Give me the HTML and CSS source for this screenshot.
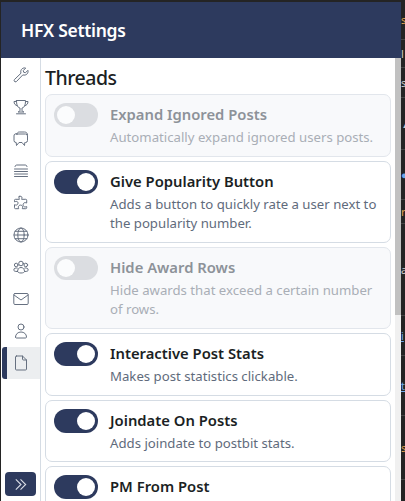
FILE: index.html
```html
<!DOCTYPE html>
<html lang="en">
<head>
<meta charset="utf-8">
<title>HFX Settings</title>
<link rel="stylesheet" href="styles.css">
</head>
<body>
<div class="frame">
  <div class="window">
    <header class="header">HFX Settings</header>
    <div class="main">
      <nav class="sidebar">
        <div class="nav-list">
          <a class="nav-item"><svg class="icon" viewBox="0 0 16 16"><path d="M2 14.600 1.400 14a1 1 0 0 1 0-1.400L8 6.200c-.6-1.800-.1-3.500 1.200-4.500 1.100-.8 2.400-1 3.500-.6L10.300 3.500l.4 1.800 1.800.4 2.400-2.400c.4 1.200.1 2.600-.8 3.600-1.100 1.200-2.700 1.500-4.300 1L3.400 14.600a1 1 0 0 1-1.400 0z"/></svg></a>
          <a class="nav-item"><svg class="icon" viewBox="0 0 16 16"><path d="M3.500 1.500h9c0 3.500-.6 7-3.500 7.500v2.500c0 .8 1.500 1 2 1.500H5c.5-.5 2-.7 2-1.500V9C4.100 8.500 3.500 5 3.500 1.500zM3.500 2.500H1c0 2.300 1.200 3.800 3.300 4.300M12.500 2.500H15c0 2.300-1.200 3.800-3.300 4.300M3.500 14.800h9"/></svg></a>
          <a class="nav-item"><svg class="icon" viewBox="0 0 16 16"><path d="M4 3h8.500a2 2 0 0 1 2 2v4.500a2 2 0 0 1-2 2h-.7l-.3 3-2.500-3h-3l-2.500 3-.3-3H3a2 2 0 0 1-2-2V5a2 2 0 0 1 3-2z"/><path d="M3.800 3.200c.2-1.300 1.200-2.200 2.500-2.200h5.200c1.800 0 3 1.100 3 2.800"/></svg></a>
          <a class="nav-item"><svg class="icon" viewBox="0 0 16 16"><path d="M2 3.500c0-1 1-1.500 2-1.500h8c1 0 2 .5 2 1.500M1.500 6h13M1.500 8.500h13M1.500 11h13M1.500 13.500h13"/></svg></a>
          <a class="nav-item"><svg class="icon" viewBox="0 0 16 16"><path d="M6 1.500c1.300-.8 3-.2 3 1.300 0 .6-.4 1-.4 1.500h4.100a1 1 0 0 1 1 1v2.700c-.5 0-1-.4-1.600-.4-1.400 0-2 1.300-2 2.200s.7 2.200 2 2.200c.6 0 1.100-.4 1.600-.4v1.100a1 1 0 0 1-1 1H9.300c0-.6.400-1 .4-1.600 0-1.300-1.200-2-2.200-2s-2.200.7-2.200 2c0 .6.400 1 .4 1.600H2.500a1 1 0 0 1-1-1v-3c.5 0 1 .4 1.600.4 1.200 0 1.900-1 1.900-2.100S4.300 6.400 3.100 6.400c-.6 0-1.100.4-1.600.4V5.300a1 1 0 0 1 1-1h3.900c0-.5-.4-.9-.4-1.500 0-.5.100-1 .4-1.300z"/></svg></a>
          <a class="nav-item"><svg class="icon" viewBox="0 0 16 16"><circle cx="8" cy="8" r="7"/><ellipse cx="8" cy="8" rx="3.200" ry="7"/><path d="M1 8h14M2 4.300h12M2 11.700h12"/></svg></a>
          <a class="nav-item"><svg class="icon" viewBox="0 0 16 16"><circle cx="8" cy="4.500" r="2.300"/><circle cx="3.200" cy="6" r="1.800"/><circle cx="12.800" cy="6" r="1.800"/><path d="M4.500 12.500C4.500 10 6 8.500 8 8.500s3.500 1.500 3.500 4c0 .8-1.500 1.500-3.500 1.500s-3.500-.7-3.500-1.500zM4.300 9.100C3 8.700.8 9 .8 11c0 1 1 1.500 3.400 1.500M11.700 9.100c1.300-.4 3.500-.1 3.500 1.900 0 1-1 1.500-3.400 1.500"/></svg></a>
          <a class="nav-item"><svg class="icon" viewBox="0 0 16 16"><rect x=".8" y="2.500" width="14.400" height="11" rx="1.200"/><path d="M1 4l7 5 7-5"/></svg></a>
          <a class="nav-item"><svg class="icon" viewBox="0 0 16 16"><circle cx="8" cy="4" r="3"/><path d="M2.500 14c0-3 2.500-5 5.500-5s5.500 2 5.500 5c0 .6-.5 1-1 1h-9c-.5 0-1-.4-1-1z"/></svg></a>
          <a class="nav-item active"><svg class="icon" viewBox="0 0 16 16"><path d="M3.500 1h6L13.500 5v9a1 1 0 0 1-1 1h-9a1 1 0 0 1-1-1V2a1 1 0 0 1 1-1zM9.500 1v3a1 1 0 0 0 1 1h3"/></svg></a>
        </div>
        <button class="collapse" type="button" aria-label="Expand"><svg class="chev" viewBox="0 0 16 16"><path d="M3 2.500 8.500 8 3 13.500M8 2.500 13.500 8 8 13.500"/></svg></button>
      </nav>
      <section class="content">
        <h2 class="heading">Threads</h2>
        <div class="cards">
          <div class="card off">
            <span class="toggle"></span>
            <div class="text"><div class="name">Expand Ignored Posts</div><div class="desc">Automatically expand ignored users posts.</div></div>
          </div>
          <div class="card">
            <span class="toggle on"></span>
            <div class="text"><div class="name">Give Popularity Button</div><div class="desc">Adds a button to quickly rate a user next to the popularity number.</div></div>
          </div>
          <div class="card off">
            <span class="toggle"></span>
            <div class="text"><div class="name">Hide Award Rows</div><div class="desc">Hide awards that exceed a certain number of rows.</div></div>
          </div>
          <div class="card">
            <span class="toggle on"></span>
            <div class="text"><div class="name">Interactive Post Stats</div><div class="desc">Makes post statistics clickable.</div></div>
          </div>
          <div class="card">
            <span class="toggle on"></span>
            <div class="text"><div class="name">Joindate On Posts</div><div class="desc">Adds joindate to postbit stats.</div></div>
          </div>
          <div class="card">
            <span class="toggle on"></span>
            <div class="text"><div class="name">PM From Post</div></div>
          </div>
        </div>
      </section>
      <div class="scrollbar"><div class="thumb"></div></div>
    </div>
  </div>
  <aside class="behind">
    <div class="strip h40"><span class="bit amber">s</span></div>
    <div class="strip h28"><span class="bit">l</span></div>
    <div class="strip h30"><span class="bit">s</span></div>
    <div class="strip h52"><span class="bit">▲</span></div>
    <div class="strip h50"><span class="bit blue">●</span></div>
    <div class="strip h24"><span class="bit amber">r</span></div>
    <div class="strip h92"><span class="bit">a</span></div>
    <div class="strip h40"><span class="bit blue link">i</span></div>
    <div class="strip h60"><span class="bit blue link">t</span></div>
    <div class="strip h64"><span class="bit amber">s</span></div>
  </aside>
</div>
</body>
</html>
```

FILE: styles.css
```css
* { box-sizing: border-box; }
html, body { margin: 0; height: 100%; overflow: hidden; }
body {
  background: #242424;
  font-family: "Noto Sans", "Open Sans", "Liberation Sans", sans-serif;
}
.frame {
  display: flex;
  height: 501px;
  padding: 2px 0 0 1px;
  background: #242424;
}
.window {
  flex: 1;
  min-width: 0;
  display: flex;
  flex-direction: column;
  background: #fff;
}
.header {
  flex: none;
  height: 56px;
  padding: 0 20px;
  display: flex;
  align-items: center;
  background: #2d3a5e;
  color: #fff;
  font-size: 17.5px;
  font-weight: 600;
  letter-spacing: -.3px;
}
.main { flex: 1; min-height: 0; display: flex; }
.sidebar {
  flex: none;
  width: 40px;
  padding: 1px 0 5px 1px;
  display: flex;
  flex-direction: column;
  justify-content: space-between;
  border-right: 1px solid #d5dce4;
}
.nav-list { display: flex; flex-direction: column; }
.nav-item {
  height: 32px;
  display: flex;
  align-items: center;
  justify-content: center;
  border-left: 5px solid transparent;
  padding-right: 5px;
  color: #4b5563;
}
.nav-item.active {
  background: #eceef0;
  border-left-color: #2d3a5e;
  border-top-left-radius: 3px;
  border-bottom-left-radius: 3px;
}
.icon {
  width: 16px;
  height: 16px;
  fill: none;
  stroke: #667080;
  stroke-width: 1;
  stroke-linejoin: round;
  stroke-linecap: round;
}
.collapse {
  align-self: flex-start;
  margin-left: 3px;
  width: 31px;
  height: 24px;
  padding: 0;
  border: 0;
  border-radius: 4px;
  background: #2d3a5e;
  display: flex;
  align-items: center;
  justify-content: center;
}
.chev {
  width: 15px;
  height: 15px;
  fill: none;
  stroke: #d8dce6;
  stroke-width: 1.2;
}
.content {
  flex: 1;
  min-width: 0;
  padding: 6px 4px 0 4px;
  overflow: hidden;
}
.heading {
  margin: 0 0 3px;
  height: 27px;
  line-height: 27px;
  font-size: 19.5px;
  font-weight: 500;
  letter-spacing: -.5px;
  color: #1b1f24;
}
.cards { display: flex; flex-direction: column; gap: 4px; }
.card {
  flex: none;
  display: flex;
  gap: 12px;
  padding: 8px 8px 8.2px;
  border: 1px solid #d5dce4;
  border-radius: 7px;
  background: #fff;
}
.toggle {
  flex: none;
  position: relative;
  width: 44px;
  height: 24px;
  border-radius: 12px;
  background: #bfc3c8;
}
.toggle::after {
  content: "";
  position: absolute;
  top: 3px;
  left: 3px;
  width: 18px;
  height: 18px;
  border-radius: 50%;
  background: #fff;
}
.toggle.on { background: #2d3a5e; }
.toggle.on::after { left: 23px; }
.text { min-width: 0; flex: 1; }
.name {
  height: 22px;
  line-height: 22px;
  font-size: 14.8px;
  font-weight: 600;
  color: #1b1f24;
}
.desc {
  margin-top: 3px;
  line-height: 19.5px;
  font-size: 13.2px;
  color: #5f6b7c;
}
.card.off { background: #f8f9fb; border-color: #e2e6ec; }
.card.off .toggle { opacity: .5; }
.card.off .name { color: #8d9299; }
.card.off .desc { color: #a9aeb6; }
.scrollbar {
  flex: none;
  width: 6px;
  background: #f0f0f0;
}
.thumb { height: 257px; background: #c1c1c1; }
.behind {
  flex: none;
  width: 4px;
  display: flex;
  flex-direction: column;
  overflow: hidden;
  background: #242424;
  margin-top: -2px;
}
.strip {
  flex: none;
  display: flex;
  align-items: center;
  border-bottom: 1px solid #444;
  overflow: hidden;
}
.h24 { height: 24px; }
.h28 { height: 28px; }
.h30 { height: 30px; }
.h40 { height: 40px; }
.h50 { height: 50px; }
.h52 { height: 52px; }
.h60 { height: 60px; }
.h64 { height: 64px; }
.h92 { height: 92px; }
.bit { font-size: 11px; line-height: 12px; color: #ccc; }
.amber { color: #e0a050; }
.blue { color: #6fa8e8; }
.link { text-decoration: underline; }
```
